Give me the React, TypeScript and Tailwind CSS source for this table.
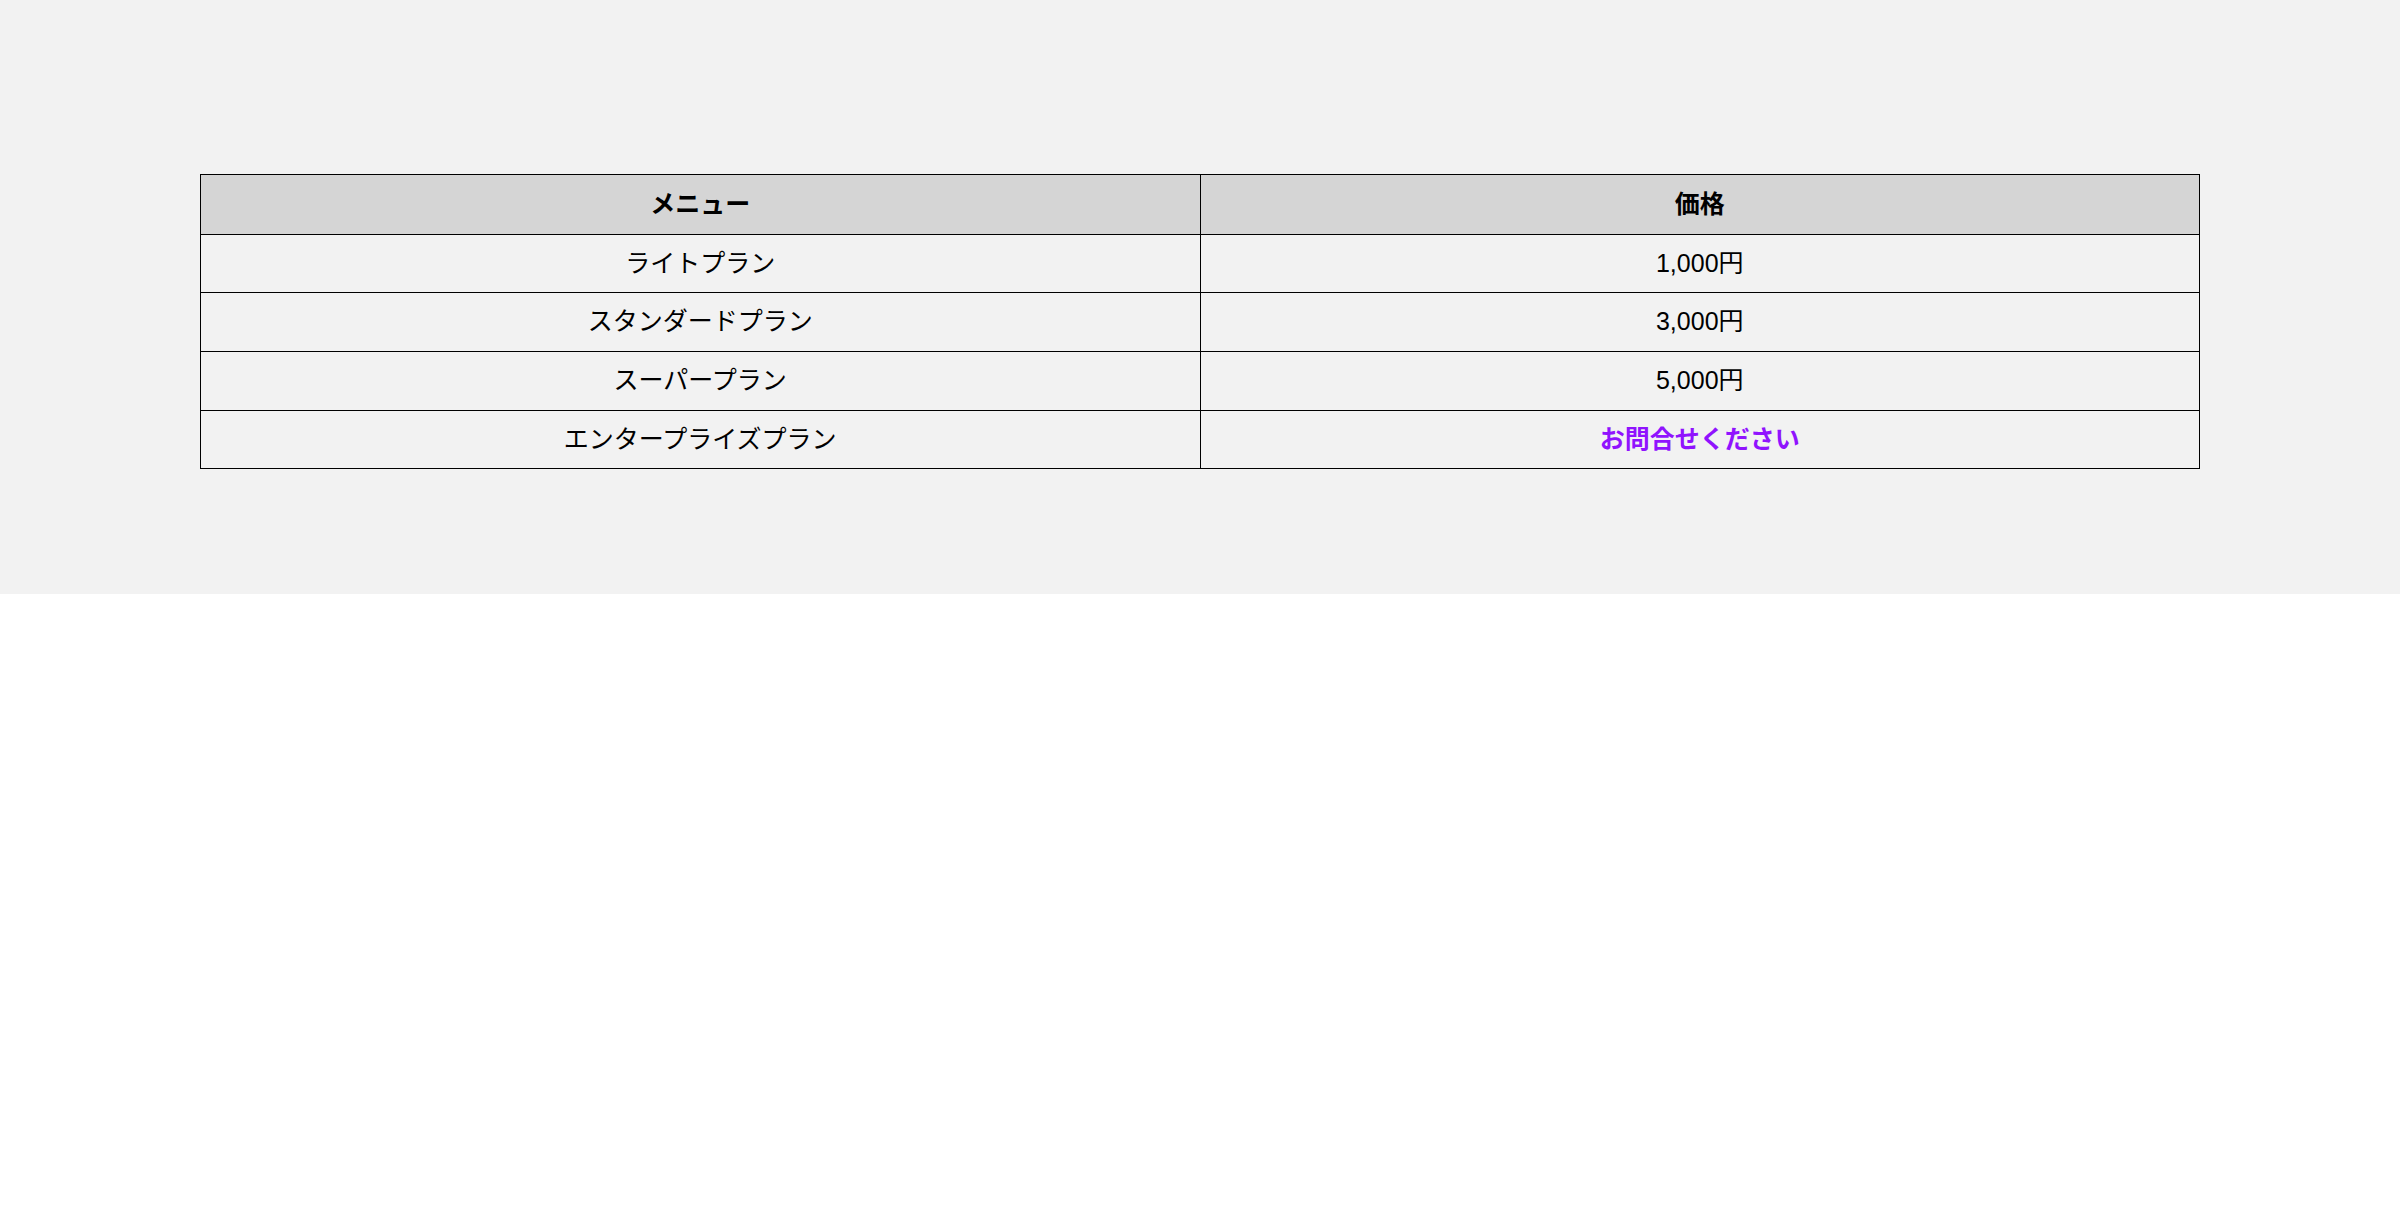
import React from 'react';

const plans = [
    { name: 'ライトプラン', price: '1,000円' },
    { name: 'スタンダードプラン', price: '3,000円' },
    { name: 'スーパープラン', price: '5,000円' },
    { name: 'エンタープライズプラン', price: 'お問合せください', contact: true },
];

export default function App() {
    return (
        <div className="min-h-screen bg-white font-['Liberation_Sans','Noto_Sans_CJK_JP',sans-serif] text-black">
            <section className="bg-[#f2f2f2] px-[200px] pt-[174px] pb-[125px]">
                <table className="w-full table-fixed border-collapse text-[25px]">
                    <thead>
                        <tr className="bg-[#d5d5d5]">
                            <th className="h-[59.5px] border border-black font-bold">メニュー</th>
                            <th className="h-[59.5px] border border-black font-bold">価格</th>
                        </tr>
                    </thead>
                    <tbody>
                        {plans.map((p) => (
                            <tr key={p.name}>
                                <td className="h-[58.7px] border border-black text-center">{p.name}</td>
                                <td
                                    className={
                                        p.contact
                                            ? 'h-[58.7px] border border-black text-center font-bold text-[#9013fe]'
                                            : 'h-[58.7px] border border-black text-center'
                                    }
                                >
                                    {p.price}
                                </td>
                            </tr>
                        ))}
                    </tbody>
                </table>
            </section>
        </div>
    );
}
